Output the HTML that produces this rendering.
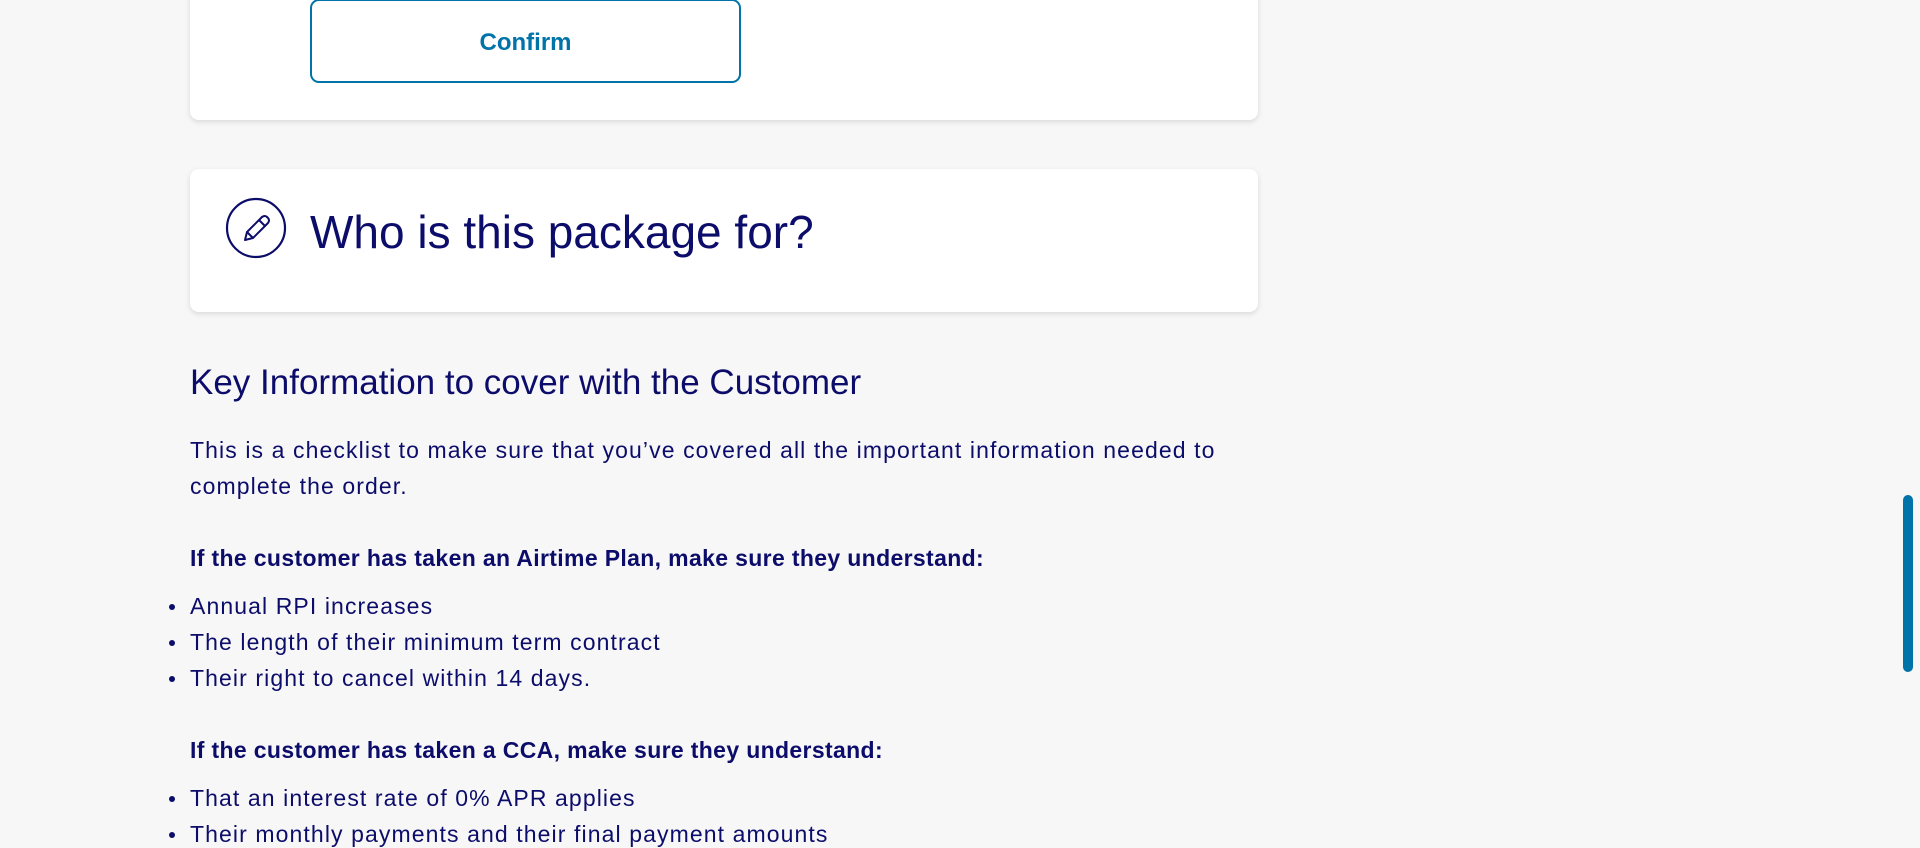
<!DOCTYPE html>
<html><head><meta charset="utf-8"><style>
html,body{margin:0;padding:0}
body{width:1920px;height:839px;background:#f7f7f7;position:relative;overflow:hidden;font-family:"Liberation Sans",sans-serif;color:#0c0c6a}
.card{position:absolute;left:190px;width:1068px;background:#fff;border-radius:9px;box-shadow:0 2px 6px rgba(0,0,0,0.12)}
.btn{position:absolute;left:310px;top:-1px;border:2.5px solid #0074a8;border-radius:9px;box-sizing:border-box;width:431px;height:84px;color:#0074a8;font-weight:bold;font-size:24px;display:flex;align-items:center;justify-content:center;padding-top:4px}
.t{position:absolute;left:190px;white-space:nowrap;font-size:23px;letter-spacing:1.1px}
.b{font-weight:bold;letter-spacing:0.35px}
.d{position:absolute;left:169px;width:6px;height:6px;border-radius:50%;background:#0c0c6a}
.sb{position:absolute;left:1903px;top:495px;width:10px;height:177px;border-radius:5px;background:#0074a8}
</style></head><body>
<div class="card" style="top:-20px;height:140px"></div>
<div class="btn">Confirm</div>
<div class="card" style="top:169px;height:143px"></div>
<svg style="position:absolute;left:225px;top:197px" width="62" height="62" viewBox="0 0 62 62">
<circle cx="31" cy="31" r="29" fill="none" stroke="#0c0c6a" stroke-width="2.2"/>
<path d="M20 43 L22 35 L37 20 Q40 18 42 20 L43 21 Q45 23 43 26 L28 41 Z M22 35 L28 41 M34 23 L40 29" fill="none" stroke="#0c0c6a" stroke-width="2" stroke-linejoin="round"/>
</svg>
<div class="t" style="left:310px;top:205px;font-size:46px;letter-spacing:0">Who is this package for?</div>
<div class="t" style="top:363px;font-size:35px;letter-spacing:0">Key Information to cover with the Customer</div>
<div class="t" style="top:432px;line-height:36px">This is a checklist to make sure that you’ve covered all the important information needed to<br>complete the order.</div>
<div class="t b" style="top:545px">If the customer has taken an Airtime Plan, make sure they understand:</div>
<div class="t" style="top:593px">Annual RPI increases</div>
<div class="t" style="top:629px">The length of their minimum term contract</div>
<div class="t" style="top:665px">Their right to cancel within 14 days.</div>
<div class="t b" style="top:737px">If the customer has taken a CCA, make sure they understand:</div>
<div class="t" style="top:785px">That an interest rate of 0% APR applies</div>
<div class="t" style="top:821px">Their monthly payments and their final payment amounts</div>
<div class="d" style="top:604px"></div>
<div class="d" style="top:640px"></div>
<div class="d" style="top:676px"></div>
<div class="d" style="top:796px"></div>
<div class="d" style="top:832px"></div>
<div class="sb"></div>
</body></html>
